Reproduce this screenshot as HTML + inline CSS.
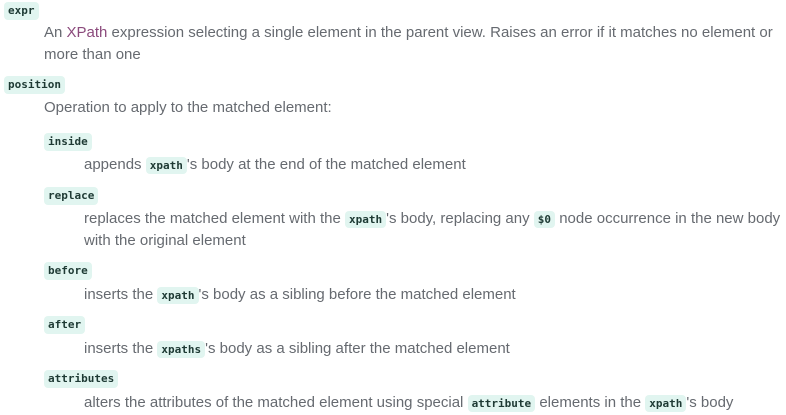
<!DOCTYPE html><html><head><style>
body{margin:0;width:786px;height:414px;background:#fff;overflow:hidden;position:relative;font-family:"Liberation Sans",sans-serif;}
.t{position:absolute;font-size:15px;line-height:22px;color:#666a70;white-space:nowrap}
code,.c{font-family:"DejaVu Sans Mono","Liberation Mono",monospace;font-size:11px;background:#e1f5f0;color:#1e3a34;border-radius:4px;padding:2px 4px;font-weight:bold}
.c{position:absolute;line-height:14px}
a{color:#8b4a7c;text-decoration:none}
</style></head><body>
<span class="c" style="left:4px;top:2px">expr</span>
<div class="t" style="left:44px;top:22px">An <a>XPath</a> expression selecting a single element in the parent view. Raises an error if it matches no element or</div>
<div class="t" style="left:44px;top:44px">more than one</div>
<span class="c" style="left:4px;top:76px">position</span>
<div class="t" style="left:44px;top:97px">Operation to apply to the matched element:</div>
<span class="c" style="left:44px;top:133px">inside</span>
<div class="t" style="left:84px;top:154px">appends <code>xpath</code>'s body at the end of the matched element</div>
<span class="c" style="left:44px;top:187px">replace</span>
<div class="t" style="left:84px;top:208px">replaces the matched element with the <code>xpath</code>'s body, replacing any <code>$0</code> node occurrence in the new body</div>
<div class="t" style="left:84px;top:230px">with the original element</div>
<span class="c" style="left:44px;top:262px">before</span>
<div class="t" style="left:84px;top:284px">inserts the <code>xpath</code>'s body as a sibling before the matched element</div>
<span class="c" style="left:44px;top:316px">after</span>
<div class="t" style="left:84px;top:338px">inserts the <code>xpaths</code>'s body as a sibling after the matched element</div>
<span class="c" style="left:44px;top:370px">attributes</span>
<div class="t" style="left:84px;top:392px">alters the attributes of the matched element using special <code>attribute</code> elements in the <code>xpath</code>'s body</div>
</body></html>
